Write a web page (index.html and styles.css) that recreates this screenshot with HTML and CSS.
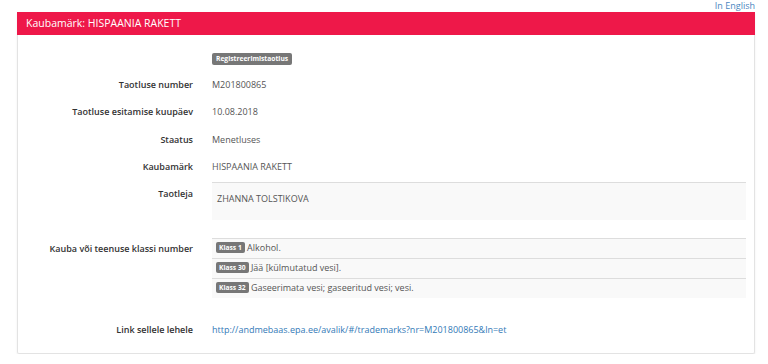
FILE: index.html
```html
<!DOCTYPE html>
<html lang="et">
<head>
<meta charset="utf-8">
<link rel="stylesheet" href="styles.css">
</head>
<body>
<div class="top"><a class="lang" href="#">In English</a></div>
<div class="panel">
  <div class="panel-heading">Kaubamärk: HISPAANIA RAKETT</div>
  <div class="panel-body">
    <div class="row badge-row"><div class="label"></div><div class="value"><span class="tag">Registreerimistaotlus</span></div></div>
    <div class="row"><div class="label">Taotluse number</div><div class="value">M201800865</div></div>
    <div class="row"><div class="label">Taotluse esitamise kuupäev</div><div class="value">10.08.2018</div></div>
    <div class="row"><div class="label">Staatus</div><div class="value">Menetluses</div></div>
    <div class="row"><div class="label">Kaubamärk</div><div class="value">HISPAANIA RAKETT</div></div>
    <div class="row row-box"><div class="label">Taotleja</div><div class="value"><div class="box">ZHANNA TOLSTIKOVA</div></div></div>
    <div class="row row-list"><div class="label">Kauba või teenuse klassi number</div>
      <div class="value">
        <ul class="list">
          <li><span class="tag">Klass 1</span> Alkohol.</li>
          <li><span class="tag">Klass 30</span> Jää [külmutatud vesi].</li>
          <li><span class="tag">Klass 32</span> Gaseerimata vesi; gaseeritud vesi; vesi.</li>
        </ul>
      </div>
    </div>
    <div class="row row-link"><div class="label">Link sellele lehele</div><div class="value"><a href="#">http://andmebaas.epa.ee/avalik/#/trademarks?nr=M201800865&amp;ln=et</a></div></div>
  </div>
</div>
</body>
</html>
```
FILE: styles.css
```css
html, body {
  margin: 0;
  padding: 0;
  background: #fff;
  font-family: "Open Sans", "Liberation Sans", sans-serif;
  font-size: 9px;
  color: #555;
}
a { color: #337ab7; text-decoration: none; }
.top {
  height: 12px;
  display: flex;
  justify-content: flex-end;
  align-items: flex-start;
  padding-right: 13px;
}
.lang {
  font-size: 9px;
  line-height: 11px;
  color: #4a86c0;
}
.panel {
  margin: 0 13px 0 17px;
  border: 1px solid #e3e3e3;
  border-top: none;
  border-radius: 2px;
  box-shadow: 0 1px 2px rgba(0,0,0,0.08);
  height: 342px;
  box-sizing: border-box;
}
.panel-heading {
  background: #ee1849;
  color: #fff;
  font-size: 10.5px;
  height: 23px;
  line-height: 23px;
  padding-left: 9px;
  margin: 0 -1px;
}
.panel-body {
  padding: 16px 8px 0 0;
}
.row {
  display: grid;
  grid-template-columns: 175px 1fr;
  column-gap: 19px;
  height: 27px;
  align-items: center;
}
.label {
  text-align: right;
  font-weight: 600;
  color: #333;
}
.value { color: #555; }
.badge-row { height: 15px; margin-bottom: 5px; }
.tag {
  display: inline-block;
  background: #777;
  color: #fff;
  font-weight: 700;
  font-size: 6.7px;
  line-height: 12px;
  padding: 0 4px;
  border-radius: 2px;
  vertical-align: middle;
}
.row:nth-child(3), .row:nth-child(4), .row:nth-child(5) { height: 27.5px; }
.row-box {
  height: auto;
  align-items: start;
  margin-top: 1px;
}
.row-box .label { padding-top: 5px; }
.box {
  background: #f9f9f9;
  border-top: 1px solid #ddd;
  height: 38px;
  padding: 9px 5px 0;
  box-sizing: border-box;
}
.row-list {
  height: auto;
  align-items: start;
  margin-top: 18px;
}
.row-list .label { padding-top: 4px; }
.list {
  list-style: none;
  margin: 0;
  padding: 0;
}
.list li {
  background: #f9f9f9;
  border-top: 1px solid #ddd;
  height: 20px;
  line-height: 18px;
  padding-left: 4px;
  box-sizing: border-box;
}
.list .tag { margin-top: -2px; line-height: 11px; padding: 0 3px; }
.row-link { margin-top: 18px; }
```
